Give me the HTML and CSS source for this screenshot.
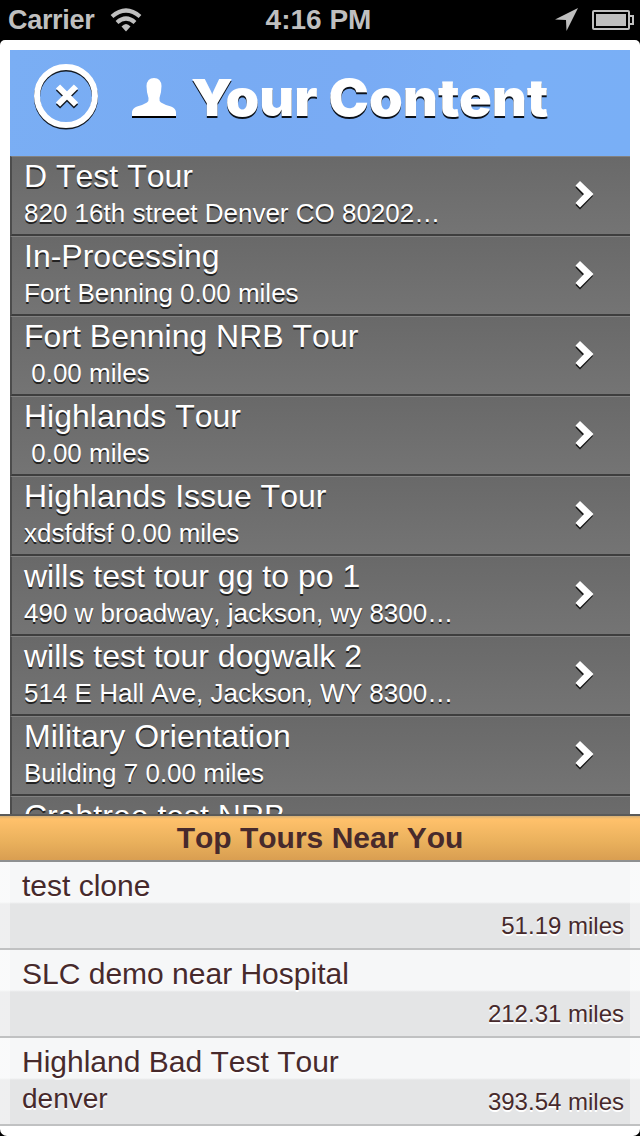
FILE: index.html
```html
<!DOCTYPE html>
<html lang="en">
<head>
<meta charset="utf-8">
<title>Your Content</title>
<link rel="stylesheet" href="styles.css">
</head>
<body>
<svg class="defs" width="0" height="0"><symbol id="chevron" viewBox="0 0 20 30"><path class="shade" d="M6 2.500L19 15L6 28.500L1.500 24L9.500 15L1.500 6.500Z"/><path class="front" d="M6 0L19.500 13L6 26.500L1.500 22L10 13L1.500 4.500Z"/></symbol></svg>
<div class="phone">
  <header class="status">
    <div class="status-side"><span class="carrier">Carrier</span>
      <svg class="wifi" width="32" height="24" viewBox="0 0 32 24"><g fill="none" stroke="#bfbfbf" stroke-width="4.200"><path d="M2 8.500Q16 -3.500 30 8.500"/><path d="M7 14.500Q16 6.500 25 14.500"/></g><path fill="#bfbfbf" d="M11.500 18.500Q16 13.500 20.500 18.500L16 23.500Z"/></svg>
    </div>
    <div class="clock">4:16 PM</div>
    <div class="status-side right">
      <svg class="arrow" width="24" height="24" viewBox="0 0 24 24"><path fill="#bfbfbf" d="M23 0L11.500 23L11 12L0 11.500Z"/></svg>
      <svg width="42" height="20" viewBox="0 0 42 20"><rect x="1" y="1" width="36" height="18" rx="1" fill="none" stroke="#bfbfbf" stroke-width="2"/><path fill="#bfbfbf" d="M4 4H34V16H4Z"/><path fill="none" stroke="#bfbfbf" stroke-width="2" d="M37 6H41V14H37"/></svg>
    </div>
  </header>
  <main class="screen">
    <section class="content">
      <div class="banner">
        <svg class="close" width="66" height="68" viewBox="0 0 66 68"><g fill="none" stroke="#141a22" stroke-width="6"><circle cx="32" cy="34.500" r="29"/><path d="M24 25.500L42 43.500M42 25.500L24 43.500"/></g><g fill="none" stroke="#fff" stroke-width="6"><circle cx="32" cy="33" r="29"/><path d="M24 23.500L42 41.500M42 23.500L24 41.500"/></g></svg>
        <svg class="person" width="46" height="42" viewBox="0 0 46 42"><path fill="#000" d="M1 36H45V40H1Z"/><path fill="#fff" d="M1 38V34Q1.500 30 6 28.500Q12 27 16 24.500Q18 23 17.500 20Q15.500 14 15.500 8Q16 0 23 0Q30 0 30.500 8Q30.500 14 28.500 20Q28 23 30 24.500Q34 27 40 28.500Q44.500 30 45 34V38Z"/></svg>
        <h1>Your Content</h1>
      </div>
      <ul class="tours">
        <li><div><h2>D Test Tour</h2><p>820 16th street Denver CO 80202…</p></div><svg class="chev"><use href="#chevron"/></svg></li>
        <li><div><h2>In-Processing</h2><p>Fort Benning 0.00 miles</p></div><svg class="chev"><use href="#chevron"/></svg></li>
        <li><div><h2>Fort Benning NRB Tour</h2><p>&nbsp;0.00 miles</p></div><svg class="chev"><use href="#chevron"/></svg></li>
        <li><div><h2>Highlands Tour</h2><p>&nbsp;0.00 miles</p></div><svg class="chev"><use href="#chevron"/></svg></li>
        <li><div><h2>Highlands Issue Tour</h2><p>xdsfdfsf 0.00 miles</p></div><svg class="chev"><use href="#chevron"/></svg></li>
        <li><div><h2>wills test tour gg to po 1</h2><p>490 w broadway, jackson, wy 8300…</p></div><svg class="chev"><use href="#chevron"/></svg></li>
        <li><div><h2>wills test tour dogwalk 2</h2><p>514 E Hall Ave, Jackson, WY 8300…</p></div><svg class="chev"><use href="#chevron"/></svg></li>
        <li><div><h2>Military Orientation</h2><p>Building 7 0.00 miles</p></div><svg class="chev"><use href="#chevron"/></svg></li>
        <li><div><h2>Crabtree test NRB</h2></div></li>
      </ul>
    </section>
    <section class="near">
      <h3>Top Tours Near You</h3>
      <ul>
        <li><div><h4>test clone</h4></div><span>51.19 miles</span></li>
        <li><div><h4>SLC demo near Hospital</h4></div><span>212.31 miles</span></li>
        <li><div><h4>Highland Bad Test Tour</h4><p>denver</p></div><span>393.54 miles</span></li>
      </ul>
    </section>
  </main>
</div>
</body>
</html>
```
FILE: styles.css
```css
* { box-sizing: border-box; margin: 0; padding: 0; }
body { background: #000; font-family: "Liberation Sans", Arial, sans-serif; font-kerning: none; }
ul { list-style: none; }
svg { display: block; flex: none; }
.defs { position: absolute; }
.phone { width: 640px; height: 1136px; display: flex; flex-direction: column; overflow: hidden; }

.status { height: 40px; flex: none; display: flex; align-items: center; color: #bfbfbf; font-size: 28px; font-weight: bold; padding: 0 6px 0 8px; }
.status-side { width: 200px; display: flex; align-items: center; }
.status-side.right { flex: 1; justify-content: flex-end; gap: 13px; }
.carrier { font-size: 27px; letter-spacing: -.3px; width: 102px; line-height: 40px; }
.clock { width: 221px; text-align: center; line-height: 40px; letter-spacing: 0; }

.screen { height: 1096px; flex: none; display: flex; flex-direction: column; background: #fff; border-radius: 5px 5px 7px 7px; overflow: hidden; }
.content { height: 774px; flex: none; padding: 10px 10px 0; overflow: hidden; }
.banner { height: 106px; display: flex; padding: 13px 0 0 24px; background: linear-gradient(100deg, #7aaef4 0%, #78abf3 35%, #79abf4 55%, #7aaff6 80%, #79aff6 100%); }
.person { margin: 15px 0 0 31px; }
h1 { margin: 5px 0 0 14px; font: 900 51px/60px Inter, sans-serif; font-kerning: normal; color: #fff; text-shadow: 0 2px 0 #0c1118; white-space: nowrap; transform: scaleX(1.06); transform-origin: left; }
.tours li { height: 80px; display: flex; justify-content: space-between; padding: 2px 36px 0 12px; background: linear-gradient(#696969, #747474); border-top: 1px solid #828282; border-left: 2px solid #4c4c4c; border-bottom: 2px solid #3e3e3e; }
.tours h2 { font-size: 32px; font-weight: normal; line-height: 34px; color: #fff; text-shadow: 0 2px 0 #222; white-space: nowrap; }
.tours p { font-size: 26px; line-height: 28px; margin-top: 6px; color: #fff; text-shadow: 0 2px 0 #222; white-space: nowrap; }
.chev { width: 20px; height: 30px; margin-top: 22px; }
.shade { fill: #161616; }
.front { fill: #fff; }

.near { color: #472a2c; text-shadow: 0 2px 0 #fff; }
.near h3 { height: 48px; font-size: 30px; line-height: 44px; text-align: center; text-shadow: none; border-top: 2px solid #5a5a59; border-bottom: 2px solid #8e9091; background: linear-gradient(#d4b078 0, #ffc16b 3px, #e9b05c 60%, #d99e51 100%); }
.near li {
  height: 88px; display: flex; justify-content: space-between; padding: 6px 16px 0 22px; border-bottom: 2px solid #c0c1c2;
  background: linear-gradient(90deg, rgba(255,255,255,.4) 10px, transparent 10px 630px, rgba(255,255,255,.4) 630px), linear-gradient(#f6f7f8 0 40px, #e4e5e6 42px);
}
.near h4 { font-size: 30px; font-weight: normal; line-height: 36px; white-space: nowrap; }
.near p { font-size: 28px; line-height: 34px; margin-top: 2px; }
.near span { font-size: 24px; line-height: 30px; margin-top: 43px; white-space: nowrap; }
```
